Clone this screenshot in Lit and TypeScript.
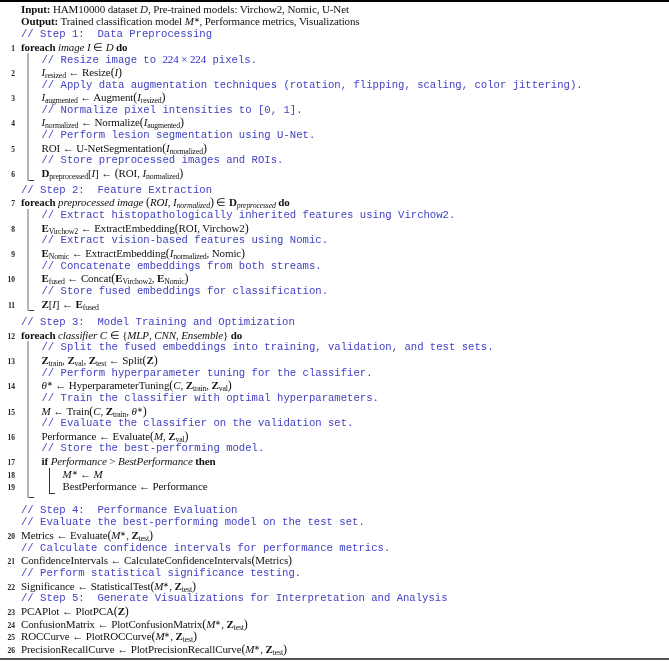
import { LitElement, html, css, nothing, TemplateResult } from "lit";
import { customElement } from "lit/decorators.js";

type C = TemplateResult | string;
const sub = (s: string) => html`<span class="sub">${s}</span>`;
const isub = (s: string) => html`<span class="sub it">${s}</span>`;
const I = (s?: string) => html`<i>I</i>${s ? sub(s) : nothing}`;
const B = (l: string, s?: string) => html`<b>${l}</b>${s ? sub(s) : nothing}`;
const L = html`<span class="op">←</span>`;
const M = html`<i>M</i><span class="sup">∗</span>`;
const O = html`<span class="par">(</span>`;
const P = html`<span class="par">)</span>`;

interface Row { n?: number; c?: C; k?: string; d?: number; }
const cm = (c: C, d = 0): Row => ({ c, k: "cm", d });
const ln = (n: number, c: C, d = 0): Row => ({ n, c, d });
const end = (d: number, k: string): Row => ({ k, d });

const rows: Row[] = [
  { c: html`<b>Input:</b> HAM10000 dataset <i>D</i>, Pre-trained models: Virchow2, Nomic, U-Net` },
  { c: html`<b>Output:</b> Trained classification model ${M}, Performance metrics, Visualizations` },
  cm("// Step 1:  Data Preprocessing"),
  ln(1, html`<b>foreach</b> <i>image I</i> ∈ <i>D</i> <b>do</b>`),
  cm(html`// Resize image to <span class="mathblue">224 × 224</span> pixels.`, 1),
  ln(2, html`${I("resized")} ${L} Resize${O}${I()}${P}`, 1),
  cm("// Apply data augmentation techniques (rotation, flipping, scaling, color jittering).", 1),
  ln(3, html`${I("augmented")} ${L} Augment${O}${I("resized")}${P}`, 1),
  cm("// Normalize pixel intensities to [0, 1].", 1),
  ln(4, html`${I("normalized")} ${L} Normalize${O}${I("augmented")}${P}`, 1),
  cm("// Perform lesion segmentation using U-Net.", 1),
  ln(5, html`ROI ${L} U-NetSegmentation${O}${I("normalized")}${P}`, 1),
  cm("// Store preprocessed images and ROIs.", 1),
  ln(6, html`${B("D", "preprocessed")}[${I()}] ${L} ${O}ROI, ${I("normalized")}${P}`, 1),
  end(1, "foot"),
  cm("// Step 2:  Feature Extraction"),
  ln(7, html`<b>foreach</b> <i>preprocessed image</i> ${O}<i>ROI</i>, <i>I</i>${isub("normalized")}${P} ∈ <b>D</b>${isub("preprocessed")} <b>do</b>`),
  cm("// Extract histopathologically inherited features using Virchow2.", 1),
  ln(8, html`${B("E", "Virchow2")} ${L} ExtractEmbedding${O}ROI, Virchow2${P}`, 1),
  cm("// Extract vision-based features using Nomic.", 1),
  ln(9, html`${B("E", "Nomic")} ${L} ExtractEmbedding${O}${I("normalized")}, Nomic${P}`, 1),
  cm("// Concatenate embeddings from both streams.", 1),
  ln(10, html`${B("E", "fused")} ${L} Concat${O}${B("E", "Virchow2")}, ${B("E", "Nomic")}${P}`, 1),
  cm("// Store fused embeddings for classification.", 1),
  ln(11, html`${B("Z")}[${I()}] ${L} ${B("E", "fused")}`, 1),
  end(1, "foot wide"),
  cm("// Step 3:  Model Training and Optimization"),
  ln(12, html`<b>foreach</b> <i>classifier C</i> ∈ {<i>MLP</i>, <i>CNN</i>, <i>Ensemble</i>} <b>do</b>`),
  cm("// Split the fused embeddings into training, validation, and test sets.", 1),
  ln(13, html`${B("Z", "train")}, ${B("Z", "val")}, ${B("Z", "test")} ${L} Split${O}${B("Z")}${P}`, 1),
  cm("// Perform hyperparameter tuning for the classifier.", 1),
  ln(14, html`<i>θ</i><span class="sup">∗</span> ${L} HyperparameterTuning${O}<i>C</i>, ${B("Z", "train")}, ${B("Z", "val")}${P}`, 1),
  cm("// Train the classifier with optimal hyperparameters.", 1),
  ln(15, html`<i>M</i> ${L} Train${O}<i>C</i>, ${B("Z", "train")}, <i>θ</i><span class="sup">∗</span>${P}`, 1),
  cm("// Evaluate the classifier on the validation set.", 1),
  ln(16, html`Performance ${L} Evaluate${O}<i>M</i>, ${B("Z", "val")}${P}`, 1),
  cm("// Store the best-performing model.", 1),
  ln(17, html`<b>if</b> <i>Performance</i> &gt; <i>BestPerformance</i> <b>then</b>`, 1),
  ln(18, html`${M} ${L} <i>M</i>`, 2),
  ln(19, html`BestPerformance ${L} Performance`, 2),
  end(2, "foot inner"),
  end(1, "foot outer"),
  cm("// Step 4:  Performance Evaluation"),
  cm("// Evaluate the best-performing model on the test set."),
  ln(20, html`Metrics ${L} Evaluate${O}${M}, ${B("Z", "test")}${P}`),
  cm("// Calculate confidence intervals for performance metrics."),
  ln(21, html`ConfidenceIntervals ${L} CalculateConfidenceIntervals${O}Metrics${P}`),
  cm("// Perform statistical significance testing."),
  ln(22, html`Significance ${L} StatisticalTest${O}${M}, ${B("Z", "test")}${P}`),
  cm("// Step 5:  Generate Visualizations for Interpretation and Analysis"),
  ln(23, html`PCAPlot ${L} PlotPCA${O}${B("Z")}${P}`),
  ln(24, html`ConfusionMatrix ${L} PlotConfusionMatrix${O}${M}, ${B("Z", "test")}${P}`),
  ln(25, html`ROCCurve ${L} PlotROCCurve${O}${M}, ${B("Z", "test")}${P}`),
  ln(26, html`PrecisionRecallCurve ${L} PlotPrecisionRecallCurve${O}${M}, ${B("Z", "test")}${P}`),
];

@customElement("app-root")
export class AppRoot extends LitElement {
  static styles = css`
    :host {
      display: block;
      width: 669px;
      height: 661px;
      background: #fff;
      color: #111;
      font-family: "Liberation Serif", serif;
      font-size: 11px;
      overflow: hidden;
    }
    .algo {
      display: flex;
      flex-direction: column;
      height: 661px;
      box-sizing: border-box;
      border-top: 2px solid #000;
      padding-top: 0.7px;
      filter: blur(0.3px);
    }
    .row {
      display: flex;
      align-items: baseline;
      line-height: 12.65px;
      height: 12.65px;
      white-space: pre;
      letter-spacing: -0.12px;
    }
    .num {
      flex: none;
      width: 15px;
      margin-right: 6px;
      text-align: right;
      font-size: 7.5px;
      font-weight: 700;
      letter-spacing: 0;
      color: #222;
    }
    .rail {
      flex: none;
      align-self: stretch;
      width: 2px;
      margin-left: 6px;
      margin-right: 12.5px;
      background: #b4b4b4;
    }
    .rail + .rail {
      width: 1px;
      margin-left: 7px;
      margin-right: 13px;
      background: #333;
    }
    .cm {
      font-family: "Liberation Mono", monospace;
      font-size: 10.62px;
      letter-spacing: 0;
      color: #4242c4;
    }
    .mathblue {
      font-family: "Liberation Serif", serif;
      font-size: 11px;
      letter-spacing: -0.12px;
      color: #2a2ac8;
    }
    .sub {
      font-size: 7.8px;
      vertical-align: -2px;
      line-height: 0;
      font-weight: 400;
      letter-spacing: -0.18px;
    }
    .sub.it { font-style: italic; }
    .sup {
      font-size: 6.5px;
      vertical-align: 3px;
      line-height: 0;
    }
    .par { font-size: 12px; line-height: 0; }
    .foot {
      height: 1px;
      margin-bottom: 3.2px;
      line-height: 0;
    }
    .foot.wide { margin-bottom: 4.8px; }
    .foot.inner {
      height: 1px;
      margin-bottom: 0;
    }
    .foot.outer {
      height: 4.4px;
      margin-bottom: 5.4px;
    }
    .tick {
      flex: none;
      width: 5px;
      height: 1px;
      align-self: flex-end;
      background: #333;
      margin-left: -12.5px;
    }
    .foot.inner .tick { margin-left: -13px; }
    .cap {
      flex: none;
      margin-top: auto;
      margin-bottom: 1px;
      height: 2px;
      background: #555;
    }
  `;

  private renderRow(r: Row) {
    const d = r.d ?? 0;
    const rails = Array.from({ length: d }, () => html`<span class="rail"></span>`);
    const isFoot = r.k?.startsWith("foot");
    return html`<div class="row ${r.k ?? ""}">
      <span class="num">${r.n ?? ""}</span>${rails}${isFoot
        ? html`<span class="tick"></span>`
        : html`<span>${r.c}</span>`}
    </div>`;
  }

  render() {
    return html`<div class="algo">
      ${rows.map((r) => this.renderRow(r))}
      <div class="cap"></div>
    </div>`;
  }
}
